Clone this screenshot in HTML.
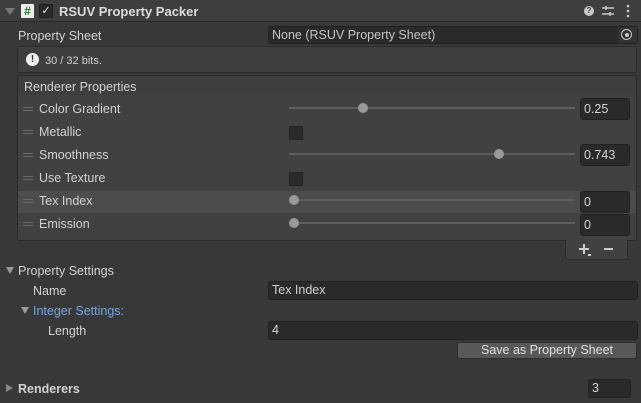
<!DOCTYPE html>
<html><head><meta charset="utf-8"><style>
*{margin:0;padding:0;box-sizing:border-box}
body{width:641px;height:403px;background:#383838;font-family:"Liberation Sans",sans-serif;font-size:12.5px;color:#d2d2d2;position:relative;overflow:hidden}
.a{position:absolute}
.t{position:absolute;line-height:16px;white-space:nowrap;margin-top:1px}
.fld{position:absolute;background:#2a2a2a;border:1px solid #212121;border-radius:3px;line-height:17px;padding-left:3px;color:#d2d2d2}
.track{position:absolute;height:2px;background:#5e5e5e}
.thumb{position:absolute;width:10px;height:10px;border-radius:50%;background:#999}
.cb{position:absolute;width:14px;height:14px;background:#2a2a2a;border:1px solid #232323;border-radius:2px}
.h{position:absolute;width:10px;height:4px;border-top:1px solid #6a6a6a;border-bottom:1px solid #6a6a6a}
</style></head><body>
<div class="a" style="left:0;top:0;width:641px;height:22px;background:#3e3e3e;border-bottom:1px solid #2a2a2a"></div>
<div class="a" style="left:5px;top:8px;width:0;height:0;border-left:5px solid transparent;border-right:5px solid transparent;border-top:7px solid #777"></div>
<div class="a" style="left:21px;top:4px;width:13px;height:14px;background:#eee;border-radius:1px;color:#1b7a1b;font-weight:bold;font-size:12px;line-height:14px;text-align:center">#</div>
<div class="a" style="left:39px;top:4px;width:14px;height:14px;background:#2a2a2a;border:1px solid #1e1e1e;border-radius:2px;color:#eee;font-size:11px;line-height:12px;text-align:center">✓</div>
<div class="t" style="left:59px;top:3px;font-weight:bold;font-size:13px;color:#dcdcdc">RSUV Property Packer</div>
<div class="a" style="left:584px;top:6px;width:10px;height:10px;border-radius:50%;background:#c8c8c8;color:#3e3e3e;font-size:8px;font-weight:bold;line-height:10px;text-align:center">?</div>
<svg class="a" style="left:602px;top:5px" width="12" height="12"><path d="M0 3H12M0 9H12M4 1V5M8 7V11" stroke="#c8c8c8" stroke-width="1.5"/></svg>
<svg class="a" style="left:626px;top:4px" width="4" height="14"><circle cx="2" cy="2" r="1.3" fill="#c8c8c8"/><circle cx="2" cy="7" r="1.3" fill="#c8c8c8"/><circle cx="2" cy="12" r="1.3" fill="#c8c8c8"/></svg>

<div class="t" style="left:18px;top:27px">Property Sheet</div>
<div class="fld" style="left:268px;top:26px;width:370px;height:18px;color:#c4c4c4">None (RSUV Property Sheet)</div>
<div class="a" style="left:618px;top:27px;width:19px;height:16px;background:#333"></div>
<div class="a" style="left:621px;top:29px;width:11px;height:11px;border:1.5px solid #c8c8c8;border-radius:50%"></div>
<div class="a" style="left:624.5px;top:32.5px;width:4px;height:4px;background:#c8c8c8;border-radius:50%"></div>

<div class="a" style="left:17px;top:46px;width:620px;height:27px;background:#3e3e3e;border:1px solid #2a2a2a;border-radius:3px"></div>
<div class="a" style="left:26px;top:53px;width:13px;height:13px;background:#eee;border-radius:50%;color:#333;font-weight:bold;font-size:10px;line-height:13px;text-align:center">!</div>
<div class="t" style="left:45px;top:52px;font-size:11px">30 / 32 bits.</div>

<div class="a" style="left:17px;top:75px;width:620px;height:21px;background:#3e3e3e;border:1px solid #2a2a2a;border-radius:3px 3px 0 0"></div>
<div class="t" style="left:24px;top:78px">Renderer Properties</div>
<div class="a" style="left:17px;top:95px;width:620px;height:146px;background:#414141;border:1px solid #2a2a2a;border-top:none;border-radius:0 0 3px 3px"></div>
<div class="a" style="left:18px;top:191px;width:618px;height:22px;background:#4c4c4c"></div>

<div class="h" style="left:23px;top:107px"></div><div class="t" style="left:39px;top:100px">Color Gradient</div>
<div class="track" style="left:289px;top:107px;width:286px"></div><div class="thumb" style="left:358px;top:103px"></div>
<div class="fld" style="left:580px;top:98px;width:50px;height:22px;padding-top:2px">0.25</div>

<div class="h" style="left:23px;top:130px"></div><div class="t" style="left:39px;top:123px">Metallic</div>
<div class="cb" style="left:289px;top:126px"></div>

<div class="h" style="left:23px;top:153px"></div><div class="t" style="left:39px;top:146px">Smoothness</div>
<div class="track" style="left:289px;top:153px;width:286px"></div><div class="thumb" style="left:494px;top:149px"></div>
<div class="fld" style="left:580px;top:144px;width:50px;height:22px;padding-top:2px">0.743</div>

<div class="h" style="left:23px;top:176px"></div><div class="t" style="left:39px;top:169px">Use Texture</div>
<div class="cb" style="left:289px;top:172px"></div>

<div class="h" style="left:23px;top:199px"></div><div class="t" style="left:39px;top:192px">Tex Index</div>
<div class="track" style="left:289px;top:199px;width:286px"></div><div class="thumb" style="left:289px;top:195px"></div>
<div class="fld" style="left:580px;top:191px;width:50px;height:22px;padding-top:2px">0</div>

<div class="h" style="left:23px;top:222px"></div><div class="t" style="left:39px;top:215px">Emission</div>
<div class="track" style="left:289px;top:222px;width:286px"></div><div class="thumb" style="left:289px;top:218px"></div>
<div class="fld" style="left:580px;top:214px;width:50px;height:22px;padding-top:2px">0</div>

<div class="a" style="left:565px;top:240px;width:63px;height:20px;background:#414141;border:1px solid #2a2a2a;border-top:none;border-radius:0 0 3px 3px"></div>
<div class="a" style="left:579px;top:248px;width:10px;height:2px;background:#ccc"></div>
<div class="a" style="left:583px;top:244px;width:2px;height:10px;background:#ccc"></div>
<div class="a" style="left:588px;top:254px;width:3px;height:2px;background:#ccc"></div>
<div class="a" style="left:604px;top:248px;width:9px;height:2px;background:#ccc"></div>

<div class="a" style="left:6px;top:267px;width:0;height:0;border-left:4px solid transparent;border-right:4px solid transparent;border-top:7px solid #999"></div>
<div class="t" style="left:18px;top:262px">Property Settings</div>
<div class="t" style="left:33px;top:282px">Name</div>
<div class="fld" style="left:268px;top:281px;width:370px;height:19px">Tex Index</div>
<div class="a" style="left:21px;top:307px;width:0;height:0;border-left:4px solid transparent;border-right:4px solid transparent;border-top:7px solid #999"></div>
<div class="t" style="left:33px;top:302px;color:#7ba4e0">Integer Settings:</div>
<div class="t" style="left:48px;top:322px">Length</div>
<div class="fld" style="left:268px;top:321px;width:370px;height:19px">4</div>
<div class="a" style="left:457px;top:342px;width:180px;height:17px;background:#585858;border:1px solid #2e2e2e;border-radius:3px;text-align:center;line-height:15px;color:#e0e0e0">Save as Property Sheet</div>

<div class="a" style="left:6px;top:384px;width:0;height:0;border-top:4px solid transparent;border-bottom:4px solid transparent;border-left:7px solid #888"></div>
<div class="t" style="left:18px;top:380px;font-weight:bold">Renderers</div>
<div class="fld" style="left:588px;top:379px;width:43px;height:19px">3</div>
</body></html>
